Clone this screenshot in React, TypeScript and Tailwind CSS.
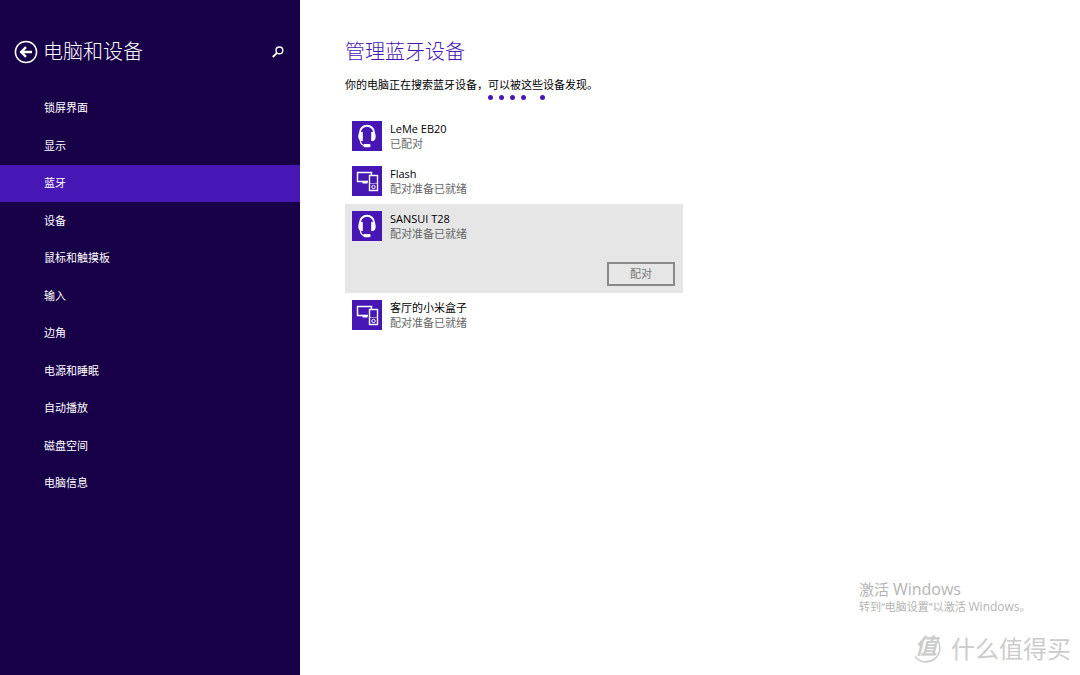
import { useState } from "react"

type DeviceKind = "headset" | "multi"

interface Device {
    id : number,
    name : string,
    status : string,
    kind : DeviceKind
}

const navItems = [
    "锁屏界面",
    "显示",
    "蓝牙",
    "设备",
    "鼠标和触摸板",
    "输入",
    "边角",
    "电源和睡眠",
    "自动播放",
    "磁盘空间",
    "电脑信息",
]

const devices : Device[] = [
    { id: 1, name: "LeMe EB20", status: "已配对", kind: "headset" },
    { id: 2, name: "Flash", status: "配对准备已就绪", kind: "multi" },
    { id: 3, name: "SANSUI T28", status: "配对准备已就绪", kind: "headset" },
    { id: 4, name: "客厅的小米盒子", status: "配对准备已就绪", kind: "multi" },
]

const BackIcon = () => (
    <svg viewBox="0 0 24 24" className="h-6 w-6" fill="none" stroke="currentColor" aria-hidden="true">
        <circle cx="12" cy="12" r="10.6" strokeWidth="1.5" />
        <path d="M18 12H7.5M12 7.2 7.2 12l4.800 4.800" strokeWidth="2.4" />
    </svg>
)

const SearchIcon = () => (
    <svg viewBox="0 0 12 12" className="h-3 w-3" fill="none" stroke="currentColor" aria-hidden="true">
        <circle cx="7.4" cy="4.4" r="3.4" strokeWidth="1.4" />
        <path d="M5 6.8.8 11" strokeWidth="1.9" />
    </svg>
)

const HeadsetIcon = () => (
    <svg viewBox="0 0 30 30" className="h-[30px] w-[30px]" fill="none" stroke="white" aria-hidden="true">
        <path d="M8 13v-1.500a7 6.700 0 0 1 14 0V13" strokeWidth="2" />
        <path d="M7.500 11h3.300v9H9.500C7.500 20 6.300 18.200 6.300 15.500c0-2 .500-3.500 1.200-4.500zM22.500 11h-3.300v9h1.300c2 0 3.200-1.800 3.200-4.500 0-2-.500-3.500-1.200-4.500z" fill="white" stroke="none" />
        <path d="M8.300 19.500c.300 2.800 1.400 4.500 4 5.200" strokeWidth="1.200" />
        <rect x="11.500" y="23" width="7" height="3.200" rx="1.300" fill="white" stroke="none" />
    </svg>
)

const MultiDeviceIcon = () => (
    <svg viewBox="0 0 30 30" className="h-[30px] w-[30px]" fill="none" stroke="white" aria-hidden="true">
        <path d="M16 15.500H5.500v-9h14V9" strokeWidth="1.400" />
        <path d="M10.500 15h5v2.500h-5z" fill="white" stroke="none" />
        <rect x="17.500" y="9.500" width="8" height="15" strokeWidth="1.400" />
        <path d="M18 17.500h7" strokeWidth=".5" />
        <circle cx="21.500" cy="21" r="1.700" strokeWidth="1" />
    </svg>
)

interface DeviceRowProps {
    device : Device,
    selected : boolean,
    onSelect : (id : number) => void
}

const DeviceRow = ({ device, selected, onSelect } : DeviceRowProps) => {

    const onClickHandler = () => {
        onSelect(device.id)
    }

    return(
        <li className={selected ? "bg-[#e6e6e6]" : ""}>
            <button type="button" onClick={onClickHandler} className="flex h-[45px] w-full items-center gap-2 px-[7px] pb-[2px] text-left">
                <span className="bg-[#4617b4]">
                    {device.kind === "headset" ? <HeadsetIcon /> : <MultiDeviceIcon />}
                </span>
                <span className="flex flex-col leading-[15px]">
                    <span className="text-black">{device.name}</span>
                    <span className="text-[#666666]">{device.status}</span>
                </span>
            </button>
            {selected && (
                <div className="flex justify-end px-2 pt-[13px] pb-[7px]">
                    <button type="button" className="h-6 w-[68px] border-2 border-[#8a8a8a] leading-4 text-[#777777]">配对</button>
                </div>
            )}
        </li>
    )
}

export default function App() {
    const [activeNav, setActiveNav] = useState("蓝牙")
    const [selectedId, setSelectedId] = useState(3)

    return(
        <div lang="zh-CN" className="relative flex min-h-screen bg-white font-['Open_Sans','Noto_Sans_CJK_SC',sans-serif] text-[11px]">
            <aside className="w-[300px] shrink-0 bg-[#180048] text-white">
                <header className="flex h-[90px] items-center pt-[14px] pr-4 pl-[14px]">
                    <button type="button" aria-label="返回">
                        <BackIcon />
                    </button>
                    <h1 className="ml-[5px] flex-1 text-[20px] leading-6 font-light">电脑和设备</h1>
                    <button type="button" aria-label="搜索">
                        <SearchIcon />
                    </button>
                </header>
                <nav className="grid h-[412px] auto-rows-fr">
                    {navItems.map((item) => (
                        <button
                            key={item}
                            type="button"
                            onClick={() => setActiveNav(item)}
                            className={`pl-11 text-left ${item === activeNav ? "bg-[#4617b4]" : ""}`}
                        >
                            {item}
                        </button>
                    ))}
                </nav>
            </aside>

            <main className="flex-1 pt-10 pl-[45px]">
                <h2 className="text-[20px] leading-6 font-light text-[#4617b4]">管理蓝牙设备</h2>
                <p className="mt-[13px] leading-4 text-black">你的电脑正在搜索蓝牙设备，可以被这些设备发现。</p>
                <div className="mt-[2px] flex gap-[6px] pl-[143px]" role="progressbar" aria-label="正在搜索">
                    <span className="h-[5px] w-[5px] rounded-full bg-[#4617b4]" />
                    <span className="h-[5px] w-[5px] rounded-full bg-[#4617b4]" />
                    <span className="h-[5px] w-[5px] rounded-full bg-[#4617b4]" />
                    <span className="h-[5px] w-[5px] rounded-full bg-[#4617b4]" />
                    <span className="ml-2 h-[5px] w-[5px] rounded-full bg-[#4617b4]" />
                </div>
                <ul className="mt-[14px] max-w-[338px]">
                    {devices.map((device) => (
                        <DeviceRow
                            key={device.id}
                            device={device}
                            selected={device.id === selectedId}
                            onSelect={setSelectedId}
                        />
                    ))}
                </ul>
            </main>

            {/* activation notice and site mark float over the page */}
            <div className="pointer-events-none absolute right-[9px] bottom-[10px] w-[212px] text-[#b4b4b4]">
                <p className="text-[15px] leading-5">激活 <span className="text-base leading-5">Windows</span></p>
                <p className="leading-4">转到“电脑设置”以激活 <span className="text-xs leading-4">Windows</span>。</p>
                <div className="mt-[18px] flex items-center justify-end gap-2 text-[#cccccc]">
                    <span className="relative flex h-8 w-8 text-[22px] leading-6 font-bold">
                        <svg viewBox="0 0 32 32" className="absolute inset-0 h-8 w-8" fill="none" stroke="currentColor" aria-hidden="true">
                            <path d="M26 6.500A13.500 13.500 0 1 1 4 23.500" strokeWidth="1.600" />
                        </svg>
                        <span className="pl-1 italic">值</span>
                    </span>
                    <span className="text-[24px] leading-8">什么值得买</span>
                </div>
            </div>
        </div>
    )
}
